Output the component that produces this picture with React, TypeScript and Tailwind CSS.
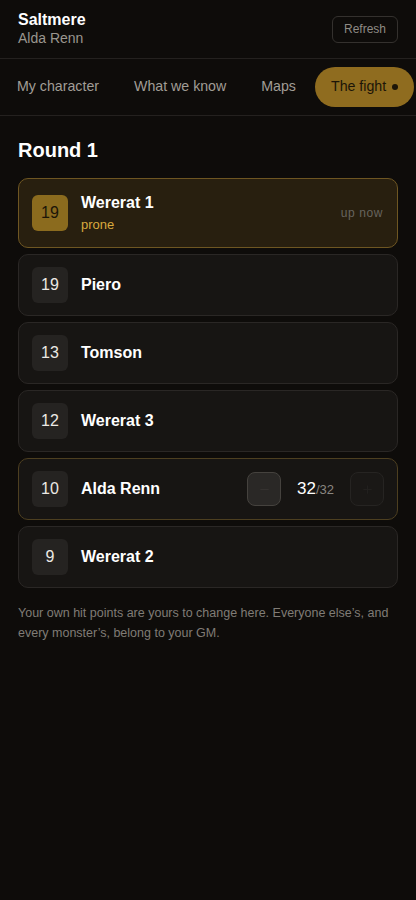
import { Minus, Plus } from 'lucide-react'

const tabs = [
  { label: 'My character', active: false },
  { label: 'What we know', active: false },
  { label: 'Maps', active: false },
  { label: 'The fight', active: true },
]

const order = [
  { init: 19, name: 'Wererat 1', current: true, note: 'prone' },
  { init: 19, name: 'Piero' },
  { init: 13, name: 'Tomson' },
  { init: 12, name: 'Wererat 3' },
  { init: 10, name: 'Alda Renn', mine: true, hp: 32, max: 32 },
  { init: 9, name: 'Wererat 2' },
]

type Row = (typeof order)[number] & { current?: boolean; note?: string; mine?: boolean; hp?: number; max?: number }

function Combatant({ row }: { row: Row }) {
  const box = row.current
    ? 'border-[#6e5622] bg-[#281f0f]'
    : row.mine
      ? 'border-[#4d3f20] bg-[#171513]'
      : 'border-[#2a2725] bg-[#171513]'
  return (
    <div className={`flex items-center gap-[13px] rounded-[10px] border px-[13px] py-3 ${box}`}>
      <div
        className={`flex h-9 w-9 shrink-0 items-center justify-center rounded-md text-[16px] ${
          row.current ? 'bg-[#8b6b1e] text-[#1c1508]' : 'bg-[#252321] text-[#ece9e4]'
        }`}
      >
        {row.init}
      </div>
      <div className="flex flex-1 flex-col">
        <p className="text-base leading-6 font-bold text-white">{row.name}</p>
        {row.note && <p className="text-[13px] leading-5 text-[#d8a93e]">{row.note}</p>}
      </div>
      {row.current && <span className="pr-[1px] text-[12px] tracking-wider text-[#67645e]">up now</span>}
      {row.mine && (
        <div className="flex items-center">
          <button
            type="button"
            className="flex h-[34px] w-[34px] items-center justify-center rounded-lg border border-[#45423e] bg-[#2a2826] text-[#353230]"
          >
            <Minus size={13} />
          </button>
          <div className="w-[69px] text-center text-white">
            <span className="text-[17px]">{row.hp}</span>
            <span className="text-[13px] text-[#8a8680]">/{row.max}</span>
          </div>
          <button
            type="button"
            className="flex h-[34px] w-[34px] items-center justify-center rounded-lg border border-[#262422] bg-[#1a1816] text-[#22201e]"
          >
            <Plus size={13} />
          </button>
        </div>
      )}
    </div>
  )
}

export default function App() {
  return (
    <div className="min-h-screen bg-[#0e0c0a] font-['Liberation_Sans',Arial,sans-serif] text-white">
      <header className="flex items-center justify-between border-b border-[#24211f] px-[18px] py-[11px]">
        <div>
          <p className="text-base leading-[18px] font-bold text-white">Saltmere</p>
          <p className="text-sm leading-[18px] text-[#9a968f]">Alda Renn</p>
        </div>
        <button
          type="button"
          className="h-[27px] rounded-md border border-[#34312e] px-[11px] text-[12px] text-[#8f8b85]"
        >
          Refresh
        </button>
      </header>

      <nav className="flex items-center gap-[3px] border-b border-[#24211f] px-[1px] py-2">
        {tabs.map((t) => (
          <button
            key={t.label}
            type="button"
            className={`flex h-10 items-center gap-[6px] rounded-full px-4 text-[14.2px] whitespace-nowrap ${
              t.active ? 'bg-[#8f6c1f] text-[#1c1508]' : 'text-[#a19d96]'
            }`}
          >
            {t.label}
            {t.active && <span className="h-[6px] w-[6px] rounded-full bg-[#1c1508]" />}
          </button>
        ))}
      </nav>

      <main className="px-[18px] pt-[20px]">
        <h1 className="text-xl leading-7 font-bold text-white">Round 1</h1>
        <div className="mt-[14px] flex flex-col gap-1.5">
          {order.map((row, i) => (
            <Combatant key={i} row={row as Row} />
          ))}
        </div>
        <p className="mt-[15px] text-[12.5px] leading-5 text-[#807c76]">
          Your own hit points are yours to change here. Everyone else’s, and every monster’s, belong to your GM.
        </p>
      </main>
    </div>
  )
}
